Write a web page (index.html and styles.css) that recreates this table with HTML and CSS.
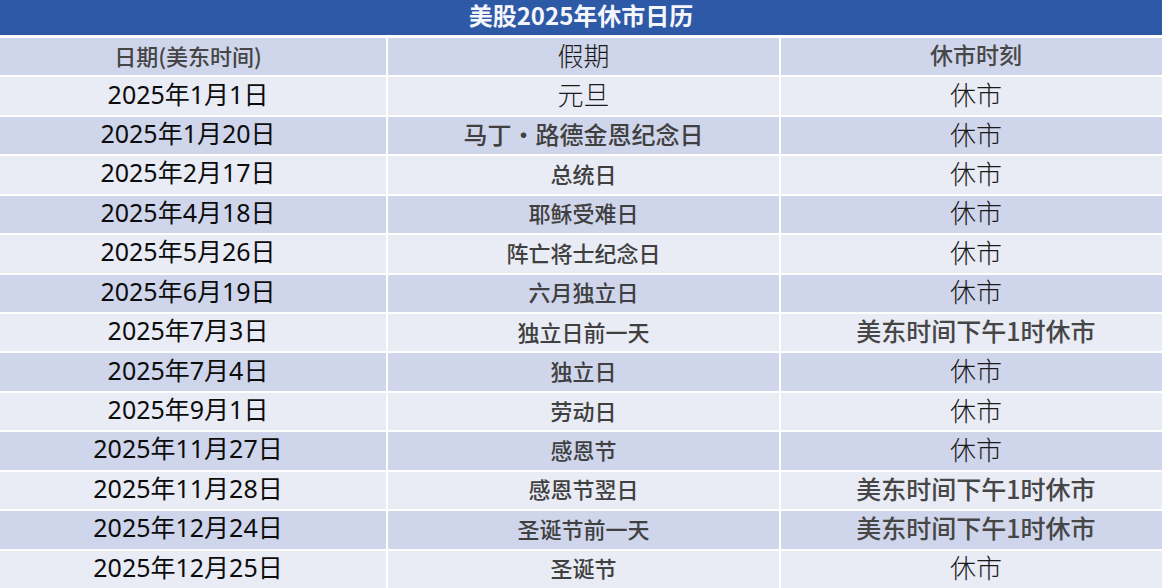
FILE: index.html
```html
<!DOCTYPE html>
<html lang="zh-CN">
<head>
<meta charset="utf-8">
<title>美股2025年休市日历</title>
<link rel="stylesheet" href="styles.css">
</head>
<body>
<div class="page">
  <div class="title">美股2025年休市日历</div>
  <div class="table">
    <div class="row dark">
      <div class="cell c1 grey head-a">日期(美东时间)</div>
      <div class="cell c2 light">假期</div>
      <div class="cell c3 grey head-c">休市时刻</div>
    </div>
    <div class="row pale">
      <div class="cell c1 date">2025年1月1日</div>
      <div class="cell c2 light">元旦</div>
      <div class="cell c3 light">休市</div>
    </div>
    <div class="row dark">
      <div class="cell c1 date">2025年1月20日</div>
      <div class="cell c2 grey big">马丁・路德金恩纪念日</div>
      <div class="cell c3 light">休市</div>
    </div>
    <div class="row pale">
      <div class="cell c1 date">2025年2月17日</div>
      <div class="cell c2 grey">总统日</div>
      <div class="cell c3 light">休市</div>
    </div>
    <div class="row dark">
      <div class="cell c1 date">2025年4月18日</div>
      <div class="cell c2 grey">耶稣受难日</div>
      <div class="cell c3 light">休市</div>
    </div>
    <div class="row pale">
      <div class="cell c1 date">2025年5月26日</div>
      <div class="cell c2 grey">阵亡将士纪念日</div>
      <div class="cell c3 light">休市</div>
    </div>
    <div class="row dark">
      <div class="cell c1 date">2025年6月19日</div>
      <div class="cell c2 grey">六月独立日</div>
      <div class="cell c3 light">休市</div>
    </div>
    <div class="row pale">
      <div class="cell c1 date">2025年7月3日</div>
      <div class="cell c2 grey">独立日前一天</div>
      <div class="cell c3 grey wide">美东时间下午1时休市</div>
    </div>
    <div class="row dark">
      <div class="cell c1 date">2025年7月4日</div>
      <div class="cell c2 grey">独立日</div>
      <div class="cell c3 light">休市</div>
    </div>
    <div class="row pale">
      <div class="cell c1 date">2025年9月1日</div>
      <div class="cell c2 grey">劳动日</div>
      <div class="cell c3 light">休市</div>
    </div>
    <div class="row dark">
      <div class="cell c1 date">2025年11月27日</div>
      <div class="cell c2 grey">感恩节</div>
      <div class="cell c3 light">休市</div>
    </div>
    <div class="row pale">
      <div class="cell c1 date">2025年11月28日</div>
      <div class="cell c2 grey">感恩节翌日</div>
      <div class="cell c3 grey wide">美东时间下午1时休市</div>
    </div>
    <div class="row dark">
      <div class="cell c1 date">2025年12月24日</div>
      <div class="cell c2 grey">圣诞节前一天</div>
      <div class="cell c3 grey wide">美东时间下午1时休市</div>
    </div>
    <div class="row pale">
      <div class="cell c1 date">2025年12月25日</div>
      <div class="cell c2 grey">圣诞节</div>
      <div class="cell c3 light">休市</div>
    </div>
  </div>
</div>
</body>
</html>
```
FILE: styles.css
```css
* { box-sizing: border-box; }
html, body {
  margin: 0;
  padding: 0;
  background: #ffffff;
}
body {
  width: 1162px;
  height: 588px;
  overflow: hidden;
  font-family: "Noto Sans", "Noto Sans CJK SC", sans-serif;
}
.page {
  display: flex;
  flex-direction: column;
  height: 588px;
}
.title {
  flex: 0 0 35px;
  display: flex;
  align-items: center;
  justify-content: center;
  height: 35px;
  margin-bottom: 3px;
  padding-bottom: 4px;
  background: #2d59a6;
  color: #f4f6fb;
  font-family: "Noto Sans CJK SC", sans-serif;
  font-weight: 700;
  font-size: 24px;
  line-height: 1.2;
}
.table {
  flex: 0 0 550px;
  height: 550px;
  display: grid;
  grid-template-rows: repeat(14, minmax(0, 1fr));
  row-gap: 2px;
}
.row {
  min-height: 0;
  display: grid;
  grid-template-columns: 386px 391px 1fr;
  column-gap: 2px;
}
.row.dark .cell { background: #cfd5ea; }
.row.pale .cell { background: #e9ebf5; }
.cell {
  min-height: 0;
  display: flex;
  align-items: center;
  justify-content: center;
  white-space: nowrap;
  line-height: 1;
  padding-bottom: 4px;
}
.c1 { padding-right: 10px; }
.c3 { padding-left: 9px; }
.date {
  font-family: "Noto Sans", "Noto Sans CJK SC", sans-serif;
  font-size: 25px;
  color: #0c0c0c;
}
.light {
  font-family: "Noto Sans CJK SC", sans-serif;
  font-weight: 300;
  font-size: 26px;
  color: #1a1a1a;
}
.grey {
  font-family: "Noto Sans CJK SC", sans-serif;
  font-weight: 500;
  font-size: 22px;
  color: #404040;
}
.grey.big {
  font-size: 24px;
}
.grey.wide {
  font-size: 25px;
  color: #464646;
}
.head-a {
  font-size: 22px;
  font-weight: 500;
  color: #454545;
}
.head-c {
  font-size: 23px;
  color: #474747;
}
```
